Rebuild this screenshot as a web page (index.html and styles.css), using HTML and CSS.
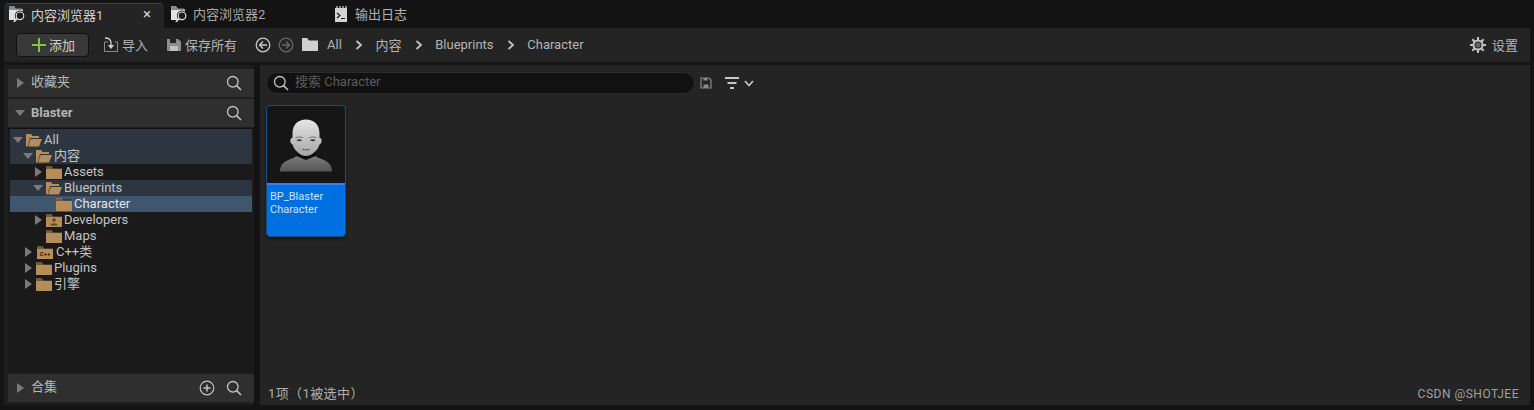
FILE: index.html
```html
<!DOCTYPE html>
<html>
<head>
  <title>内容浏览器</title>
  <meta name="viewport" content="width=device-width, initial-scale=1.0">
  <link rel="stylesheet" href="styles.css">
</head>

<body>

<svg class="defs" width="0" height="0">
  <symbol id="folder" viewBox="0 0 16 14"><path d="M0 1.500 0 14H16V3.500H7L6 1.500Z" fill="#b58d58"/><path d="M0 3H16" stroke="#131313" stroke-width=".8"/></symbol>
  <symbol id="folder-open" viewBox="0 0 16 14"><path d="M0 13.500V1H5L6.500 3H13V5H4L1.500 13.500Z" fill="#b58d58"/><path d="M4.500 6H16L13 13.500H2Z" fill="#b58d58"/></symbol>
  <symbol id="search" viewBox="0 0 16 16"><circle cx="6.800" cy="6.800" r="5.300" fill="none" stroke="#c4c4c4" stroke-width="1.300"/><path d="M10.600 10.600 15 15" stroke="#c4c4c4" stroke-width="1.500"/></symbol>
  <symbol id="tab-icon" viewBox="0 0 16 16"><path d="M0 0H5L7 2.500H13V3.200H0Z" fill="#8c8c8c"/><path d="M0 3.500H14V8H10V14H0Z" fill="#e2e2e2"/><circle cx="11" cy="9.800" r="5.200" fill="#1c1c1c"/><circle cx="11" cy="9.800" r="3.800" fill="#1c1c1c" stroke="#e2e2e2" stroke-width="1.200"/><path d="M8.300 12.500 4.800 16" stroke="#e2e2e2" stroke-width="1.600"/></symbol>
</svg>

<div class="tabbar">
  <div class="tab active">
    <svg class="icon16"><use href="#tab-icon"/></svg>
    <span class="tab-label">内容浏览器1</span>
    <span class="tab-close">×</span>
  </div>
  <div class="tab second">
    <svg class="icon16"><use href="#tab-icon"/></svg>
    <span class="tab-label">内容浏览器2</span>
  </div>
  <div class="tab log">
    <svg class="icon16" viewBox="0 0 16 16"><path d="M2 2H14V16H2Z" fill="#d4d4d4"/><path d="M4 0V3M7 0V3M10 0V3M13 0V3" stroke="#d4d4d4" stroke-width="1.200"/><path d="M4 7 7 9.500 4 12M8 12.500H12" fill="none" stroke="#1a1a1a" stroke-width="1.200"/></svg>
    <span class="tab-label">输出日志</span>
  </div>
</div>

<div class="toolbar">
  <button class="add-btn">
    <svg class="icon16" viewBox="0 0 16 16"><path d="M8 1V15M1 8H15" stroke="#86c440" stroke-width="2"/></svg>
    <span>添加</span>
  </button>
  <div class="tool import">
    <svg class="icon16" viewBox="0 0 16 16"><path d="M5 5H1.500V14.500H14.500V5H12" fill="none" stroke="#8c8c8c"/><path d="M2 1C6 1 8 2.500 8 6V10" fill="none" stroke="#d0d0d0" stroke-width="1.300"/><path d="M4.800 8H11.200L8 12Z" fill="#d0d0d0"/></svg>
    导入
  </div>
  <div class="tool save">
    <svg class="icon14" viewBox="0 0 14 14"><path d="M0 1H11L14 3.500V13H0Z" fill="#8d8d8d"/><path d="M3 1H9V5H3Z" fill="#242424"/><path d="M3 8H11V13H3Z" fill="#c0c0c0"/></svg>
    保存所有
  </div>
  <div class="nav-icons">
    <svg class="icon16" viewBox="0 0 16 16"><circle cx="8" cy="8" r="6.800" fill="none" stroke="#c8c8c8" stroke-width="1.300"/><path d="M8 4.500 4.500 8 8 11.500M4.500 8H12" fill="none" stroke="#c8c8c8" stroke-width="1.400"/></svg>
    <svg class="icon16" viewBox="0 0 16 16"><circle cx="8" cy="8" r="6.800" fill="none" stroke="#666" stroke-width="1.300"/><path d="M8 4.500 11.500 8 8 11.500M11.500 8H4" fill="none" stroke="#666" stroke-width="1.400"/></svg>
  </div>
  <div class="crumbs">
    <svg class="crumb-folder" viewBox="0 0 16 13"><path d="M0 0H5L7 2.500H16V13H0Z" fill="#d0d0d0"/></svg>
    <span>All</span>
    <svg class="chev" viewBox="0 0 8 10"><path d="M1.500 1 6 5 1.500 9" fill="none" stroke="#c4c4c4" stroke-width="1.800"/></svg>
    <span>内容</span>
    <svg class="chev" viewBox="0 0 8 10"><path d="M1.500 1 6 5 1.500 9" fill="none" stroke="#c4c4c4" stroke-width="1.800"/></svg>
    <span>Blueprints</span>
    <svg class="chev" viewBox="0 0 8 10"><path d="M1.500 1 6 5 1.500 9" fill="none" stroke="#c4c4c4" stroke-width="1.800"/></svg>
    <span>Character</span>
  </div>
  <div class="settings">
    <svg class="icon16" viewBox="0 0 16 16"><circle cx="8" cy="8" r="4.500" fill="none" stroke="#c4c4c4" stroke-width="2"/><circle cx="8" cy="8" r="2.500" fill="#666"/><path d="M8 0V3M8 13V16M0 8H3M13 8H16M2.300 2.300 4.500 4.500M11.500 11.500 13.700 13.700M2.300 13.700 4.500 11.500M11.500 4.500 13.700 2.300" stroke="#c4c4c4" stroke-width="2"/></svg>
    <span>设置</span>
  </div>
</div>

<div class="main">
  <div class="sidebar">
    <div class="panel-head">
      <span class="arrow right"></span>
      <span class="head-title cjk">收藏夹</span>
      <svg class="icon16"><use href="#search"/></svg>
    </div>
    <div class="panel-head">
      <span class="arrow down"></span>
      <span class="head-title bold">Blaster</span>
      <svg class="icon16"><use href="#search"/></svg>
    </div>
    <div class="tree">
      <div class="row first hl lv0"><span class="arrow down"></span><svg class="fld"><use href="#folder-open"/></svg><span>All</span></div>
      <div class="row hl lv1"><span class="arrow down"></span><svg class="fld"><use href="#folder-open"/></svg><span class="cjk">内容</span></div>
      <div class="row lv2"><span class="arrow right"></span><svg class="fld"><use href="#folder"/></svg><span>Assets</span></div>
      <div class="row hl lv2"><span class="arrow down"></span><svg class="fld"><use href="#folder-open"/></svg><span>Blueprints</span></div>
      <div class="row sel lv3"><span class="arrow none"></span><svg class="fld"><use href="#folder"/></svg><span>Character</span></div>
      <div class="row lv2"><span class="arrow right"></span>
        <svg class="fld" viewBox="0 0 16 14"><use href="#folder" width="16" height="14"/><circle cx="8" cy="7" r="1.800" fill="#5c4a32"/><path d="M4.500 12.500C4.500 9.500 11.500 9.500 11.500 12.500Z" fill="#5c4a32"/></svg>
        <span>Developers</span></div>
      <div class="row lv2"><span class="arrow none"></span><svg class="fld"><use href="#folder"/></svg><span>Maps</span></div>
      <div class="row lv1"><span class="arrow right"></span>
        <svg class="fld cpp" viewBox="0 0 16 14"><use href="#folder" width="16" height="14"/><text x="8" y="11" class="cpp-text">C++</text></svg>
        <span class="cjk">C++类</span></div>
      <div class="row lv1"><span class="arrow right"></span><svg class="fld"><use href="#folder"/></svg><span>Plugins</span></div>
      <div class="row lv1"><span class="arrow right"></span><svg class="fld"><use href="#folder"/></svg><span class="cjk">引擎</span></div>
    </div>
    <div class="panel-head collect">
      <span class="arrow right"></span>
      <span class="head-title cjk">合集</span>
      <svg class="icon16 add-col" viewBox="0 0 16 16"><circle cx="8" cy="8" r="6.800" fill="none" stroke="#c4c4c4" stroke-width="1.200"/><path d="M8 4.500V11.500M4.500 8H11.500" stroke="#c4c4c4" stroke-width="1.500"/></svg>
      <svg class="icon16"><use href="#search"/></svg>
    </div>
  </div>

  <div class="content">
    <div class="filter-row">
      <div class="search-box">
        <svg class="icon16"><use href="#search"/></svg>
        <span class="cjk">搜索 Character</span>
      </div>
      <svg class="icon12 save-search" viewBox="0 0 12 12"><path d="M1 1H9L11 3V11H1Z" fill="none" stroke="#8a8a8a" stroke-width="1.200"/><path d="M3.500 7.500H8.500V11H3.500ZM3.500 1H7.500V3.500H3.500Z" fill="#8a8a8a"/></svg>
      <svg class="icon16 filter" viewBox="0 0 16 16"><path d="M1 3H15M3.500 8H12.500M6 13H10" stroke="#c8c8c8" stroke-width="2"/></svg>
      <svg class="filter-caret" viewBox="0 0 10 7"><path d="M1 1 5 5.500 9 1" fill="none" stroke="#c8c8c8" stroke-width="1.600"/></svg>
    </div>

    <div class="grid">
      <div class="asset">
        <div class="thumb">
          <svg viewBox="0 0 54 54" width="52" height="53">
            <defs>
              <linearGradient id="skin" x1="0" y1="0" x2="0" y2="1"><stop offset="0" stop-color="#e6e6e6"/><stop offset="1" stop-color="#a4a4a4"/></linearGradient>
              <linearGradient id="torso" x1="0" y1="0" x2="0" y2="1"><stop offset="0" stop-color="#808080"/><stop offset="1" stop-color="#555"/></linearGradient>
            </defs>
            <path d="M0 54C0 46 5 43 14 40L20 36H34L40 40C49 43 54 46 54 54Z" fill="url(#torso)"/>
            <path d="M18 32 17 38 27 42 37 38 36 32Z" fill="#0b0b0b"/>
            <path d="M13 14C13 5 19 0 27 0S41 5 41 14V19C44 19 44 25 41 26 39 33 32 38 27 38S15 33 13 26C10 25 10 19 13 19Z" fill="url(#skin)"/>
            <path d="M17 21.500Q20 19.500 23 21.500Q20 23.500 17 21.500ZM31 21.500Q34 19.500 37 21.500Q34 23.500 31 21.500Z" fill="#333"/>
            <path d="M16 19Q20 17 24 19M30 19Q34 17 38 19" fill="none" stroke="#777"/>
            <path d="M23 31Q27 32.500 31 31" fill="none" stroke="#555"/>
          </svg>
        </div>
        <div class="asset-name">BP_Blaster<br>Character</div>
      </div>
    </div>

    <div class="status">
      <span class="count">1项（1被选中）</span>
      <span class="watermark">CSDN @SHOTJEE</span>
    </div>
  </div>
</div>

</body>
</html>
```

FILE: styles.css
```css
* {
  margin: 0;
  padding: 0;
  box-sizing: border-box;
  font-family: "Roboto", "Noto Sans CJK SC", sans-serif;
}

html, body {
  height: 100%;
  overflow: hidden;
}

body {
  background: #131313;
  color: #c0c0c0;
  font-size: 13px;
  display: flex;
  flex-direction: column;
  padding: 0 4px 5px;
}

.defs { display: block; height: 0; }

svg { flex: none; display: block; }
.icon16 { width: 16px; height: 16px; }
.icon14 { width: 14px; height: 14px; }
.icon12 { width: 12px; height: 12px; }

/* mixed latin and cjk lines sit low in the line box */
.cjk { margin-bottom: 6px; }

/* tabs */
.tabbar {
  height: 28px;
  flex: none;
  display: flex;
  align-items: flex-end;
}

.tab {
  height: 25px;
  width: 160px;
  padding-left: 5px;
  padding-bottom: 4px;
  display: flex;
  align-items: center;
  color: #a8a8a8;
}

.tab.active {
  background: #242424;
  border-top: 1px solid #14507f;
  border-radius: 5px 5px 0 0;
  color: #d0d0d0;
}

.tab.second { padding-left: 7px; }

.tab.log {
  margin-left: 4px;
  color: #b0b0b0;
}

.tab-label { margin-left: 6px; }
.tab-close { margin-left: auto; margin-right: 13px; font-size: 15px; color: #d0d0d0; }

/* toolbar */
.toolbar {
  height: 35px;
  flex: none;
  background: #242424;
  display: flex;
  align-items: center;
  padding-left: 12px;
  border-bottom: 2px solid #1c1c1c;
}

.add-btn {
  width: 73px;
  height: 24px;
  background: #383838;
  border: 1px solid #111;
  border-radius: 4px;
  color: #d0d0d0;
  font-size: 13px;
  display: flex;
  align-items: center;
  padding-left: 14px;
  gap: 2px;
}

.tool {
  display: flex;
  align-items: center;
  color: #b4b4b4;
}

.import { margin-left: 14px; gap: 3px; }
.save { margin-left: 19px; gap: 4px; }

.nav-icons {
  margin-left: 18px;
  display: flex;
  gap: 7px;
}

.crumbs {
  margin-left: 8px;
  display: flex;
  align-items: center;
  color: #b4b4b4;
}

.crumb-folder { width: 16px; height: 13px; margin-right: 9px; }
.chev { width: 8px; height: 10px; margin: 0 12.700px 0 13px; }

.settings {
  margin-left: auto;
  margin-right: 12px;
  display: flex;
  align-items: center;
  gap: 6px;
  color: #b4b4b4;
}

/* main area */
.main {
  flex: 1;
  min-height: 0;
  display: flex;
  gap: 6px;
  padding-top: 2px;
}

.sidebar {
  width: 250px;
  flex: none;
  padding: 4px 0 3px 4px;
  background: #1e1e1e;
  display: flex;
  flex-direction: column;
  gap: 2px;
}

.panel-head {
  height: 28px;
  flex: none;
  background: #2f2f2f;
  display: flex;
  align-items: center;
  padding-left: 9px;
  padding-right: 12px;
  color: #b8b8b8;
}

.head-title { margin-left: 7px; flex: 1; }
.panel-head .arrow.down { margin-right: -1px; }
.bold { font-weight: 700; color: #b4b4b4; margin-bottom: 2px; }
.add-col { margin-right: 11px; }

.arrow { flex: none; display: block; width: 0; height: 0; }
.arrow.right {
  border-top: 5px solid transparent;
  border-bottom: 5px solid transparent;
  border-left: 7px solid #7a7a7a;
}
.arrow.down {
  border-left: 5px solid transparent;
  border-right: 5px solid transparent;
  border-top: 6px solid #7a7a7a;
  margin-left: -2px;
}
.arrow.none { width: 7px; }

/* tree */
.tree {
  flex: 1;
  min-height: 0;
  background: #1a1a1a;
  border-top: 1px solid #111;
  padding: 0 2px;
  margin-top: -1px;
  margin-bottom: -1px;
}

.row {
  height: 16px;
  display: flex;
  align-items: center;
  color: #c4c4c4;
  font-size: 13px;
  white-space: nowrap;
}

.row > span:not(.arrow) { margin-bottom: 2px; }
.row > span.cjk { margin-bottom: 4px; }
.row.first { height: 19px; padding-top: 3px; }
.row .arrow { margin-right: 4px; }
.row .arrow.down { margin-right: 3px; }
.row.hl { background: #2d3540; }
.row.sel { background: #3f566f; color: #e4e4e4; }
.lv0 { padding-left: 5px; }
.lv1 { padding-left: 15px; }
.lv2 { padding-left: 25px; }
.lv3 { padding-left: 35px; }

.fld { width: 16px; height: 14px; margin-right: 2px; }
.fld.cpp { margin-right: 3px; margin-left: 1px; }
.cpp-text {
  font-size: 6px;
  font-weight: 700;
  fill: #2a2115;
  text-anchor: middle;
}

/* content */
.content {
  flex: 1;
  min-width: 0;
  background: #242424;
  display: flex;
  flex-direction: column;
  padding: 7px 11px 0 6px;
}

.filter-row {
  height: 22px;
  flex: none;
  display: flex;
  align-items: center;
}

.search-box {
  width: 429px;
  height: 22px;
  background: #111;
  border: 1px solid #2c2c2c;
  border-radius: 11px;
  display: flex;
  align-items: center;
  gap: 6px;
  padding-left: 6px;
  color: #5c5c5c;
  font-size: 13px;
}

.save-search { margin-left: 5px; }
.filter { margin-left: 12px; }
.filter-caret { width: 10px; height: 7px; margin-left: 4px; }

.grid {
  flex: 1;
  min-height: 0;
  padding-top: 11px;
}

.asset {
  width: 80px;
  height: 132px;
  background: #0070e0;
  border: 1px solid #154f85;
  border-radius: 4px;
  overflow: hidden;
  box-shadow: 0 2px 3px #111;
}

.thumb {
  height: 79px;
  background: #161616;
  border-bottom: 2px solid #3a80ee;
  display: flex;
  justify-content: center;
  align-items: flex-end;
  padding-bottom: 11px;
}

.asset-name {
  padding: 5px 3px 0;
  font-size: 11px;
  line-height: 13px;
  color: #cfe3fa;
}

.status {
  height: 24px;
  flex: none;
  display: flex;
  justify-content: space-between;
  color: #b0b0b0;
  padding-left: 2px;
}

.count { padding-top: 2px; letter-spacing: .4px; }

.watermark {
  font-size: 12px;
  letter-spacing: .5px;
  color: #a0a0a0;
  padding-top: 6px;
}
```
